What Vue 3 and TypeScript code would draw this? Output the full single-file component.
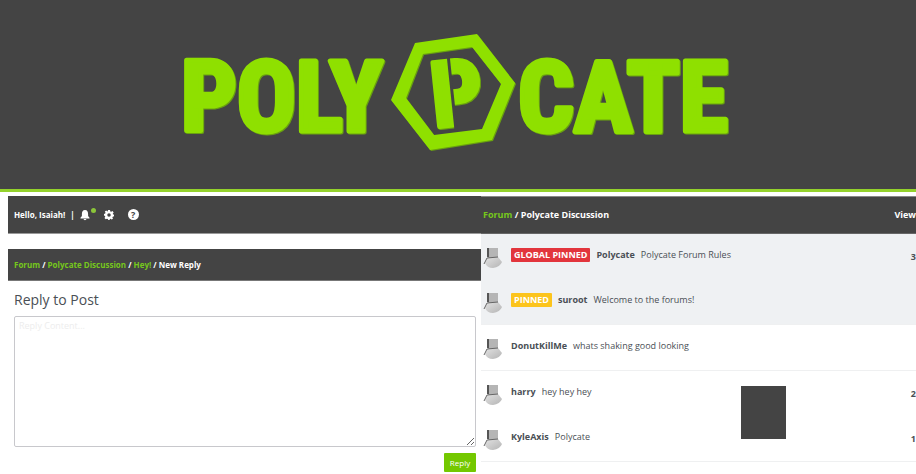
<script setup lang="ts">
interface Topic {
  author: string
  title: string
  views: string
  badge?: string
  tone?: 'global' | 'local'
  divided?: boolean
}

const topics: Topic[] = [
  { author: 'Polycate', title: 'Polycate Forum Rules', views: '3', badge: 'GLOBAL PINNED', tone: 'global' },
  { author: 'suroot', title: 'Welcome to the forums!', views: '', badge: 'PINNED', tone: 'local', divided: true },
  { author: 'DonutKillMe', title: 'whats shaking good looking', views: '', divided: true },
  { author: 'harry', title: 'hey hey hey', views: '2' },
  { author: 'KyleAxis', title: 'Polycate', views: '1', divided: true },
]
</script>

<template>
  <div class="page">
    <header class="banner">
      <svg class="logo" viewBox="158 24 600 136" role="img" aria-label="Polycate">
        <g class="mark">
          <text class="word" x="181" y="131">POLY</text>
          <text class="word" x="518" y="131">CATE</text>
          <path
            fill-rule="evenodd"
            d="M415 43L477 34L515 83L492 140L430 150L391 100ZM423 54L406 98L434 135L482 129L501 84L472 47Z"
          />
          <g transform="rotate(-6 453 92)">
            <text class="emblem" x="431" y="125">P</text>
          </g>
        </g>
        <g transform="rotate(-6 453 92)">
          <path class="slit" d="M452 54V132" />
        </g>
      </svg>
    </header>

    <div class="columns">
      <main class="left">
        <nav class="userbar" aria-label="Account">
          <span>Hello, Isaiah!</span>
          <span class="sep">|</span>
          <button type="button" class="icon bell" aria-label="Notifications">
            <svg width="10" height="12" viewBox="0 0 10 12">
              <path d="M5 1C2.700 1 1.900 2.800 1.900 5V7L.5 8.700V9.500H9.500V8.700L8.100 7V5C8.100 2.800 7.300 1 5 1ZM3.600 10H6.400C6.400 11.500 3.600 11.500 3.600 10Z" />
            </svg>
            <i class="dot"></i>
          </button>
          <button type="button" class="icon gear" aria-label="Settings">
            <svg width="10" height="10" viewBox="0 0 20 20">
              <path
                fill-rule="evenodd"
                d="M8 0H12L12.600 2.900L14.400 3.700L17 2.100L19.300 5L17.500 7.300L17.900 8.600L20 9.500V12.500L17.500 13.300L16.800 15L18 17.300L15.300 19.200L13.200 17.500L12 18L11 20H8.500L7.600 17.900L6 17.300L3.500 18.500L1 16L2.500 13.700L2 12L0 11V8L2.400 7.200L3 5.600L1.700 3.200L4.500 1.200L6.600 2.800L7.500 2.500ZM10 6.500A3.500 3.500 0 1 0 10 13.500A3.500 3.500 0 1 0 10 6.500Z"
              />
            </svg>
          </button>
          <button type="button" class="icon help" aria-label="Help">?</button>
        </nav>

        <nav class="crumbs" aria-label="Breadcrumb">
          <a href="#">Forum</a> / <a href="#">Polycate Discussion</a> / <a href="#">Hey!</a> / New Reply
        </nav>

        <form class="reply" @submit.prevent>
          <label for="reply-body">Reply to Post</label>
          <textarea id="reply-body" placeholder="Reply Content..."></textarea>
          <button type="submit">Reply</button>
        </form>
      </main>

      <section class="right">
        <table>
          <thead>
            <tr>
              <th scope="col"><a href="#">Forum</a> / Polycate Discussion</th>
              <th scope="col" class="views">View</th>
            </tr>
          </thead>
          <tbody>
            <tr v-for="t in topics" :key="t.author" :class="{ pinned: t.badge, divided: t.divided }">
              <td>
                <div class="topic">
                  <svg class="avatar" width="20" height="22" viewBox="0 0 20 22" aria-hidden="true">
                    <defs>
                      <linearGradient id="shade" x1="0" y1="0" x2="1" y2="1">
                        <stop offset="0" stop-color="#e2e2e2" />
                        <stop offset="1" stop-color="#b4b4b4" />
                      </linearGradient>
                    </defs>
                    <path fill="#b5b5b5" d="M5 0H15V11H5Z" />
                    <path fill="#555" d="M4 0H6V9H4Z" />
                    <path fill="url(#shade)" d="M4 10L15 9L19 14Q17 19 10 20Q4 20 2 15Z" />
                    <path fill="none" stroke="#666" d="M1 16L4 10L15 9" />
                  </svg>
                  <span v-if="t.badge" class="badge" :class="t.tone">{{ t.badge }}</span>
                  <b>{{ t.author }}</b>
                  <span class="title">{{ t.title }}</span>
                </div>
              </td>
              <td class="views">{{ t.views }}</td>
            </tr>
          </tbody>
        </table>
        <div class="block"></div>
      </section>
    </div>
  </div>
</template>

<style>
body {
  background: #fff;
  overflow: hidden;
}
</style>

<style scoped>
.page {
  font-family: "Open Sans", "Noto Sans", sans-serif;
  font-size: 9px;
  line-height: 14px;
  color: #4a4f55;
}
.banner {
  display: flex;
  justify-content: center;
  padding: 24px 0 29px;
  background: #444;
  border-bottom: 3px solid #94d22c;
}
.logo {
  width: 100%;
  max-width: 600px;
  height: 136px;
}
.mark {
  fill: #8fe000;
  filter: drop-shadow(1px 1px 0 #69a010);
}
.word,
.emblem {
  font-family: "Roboto Condensed", "Liberation Sans Narrow", "Liberation Sans", sans-serif;
  font-weight: 700;
  stroke: #8fe000;
  stroke-linejoin: round;
}
.word {
  font-size: 98px;
  stroke-width: 5px;
}
.emblem {
  font-size: 90px;
  stroke-width: 5px;
}
.slit {
  fill: none;
  stroke: #444;
  stroke-width: 3px;
}
.columns {
  display: grid;
  grid-template-columns: 473fr 435fr;
  padding: 4px 0 0 8px;
}
.userbar,
.crumbs {
  display: flex;
  align-items: center;
  background: #444;
  color: #fff;
  font-weight: 700;
  font-size: 8px;
  padding: 0 6px;
}
.userbar {
  height: 37px;
  border-bottom: 1px solid #999;
}
.sep {
  margin: 0 5px;
}
.crumbs {
  display: block;
  line-height: 31px;
  margin-top: 15px;
  border-bottom: 1px solid #777;
}
a {
  color: #76c81c;
  text-decoration: none;
}
.icon {
  display: block;
  position: relative;
  border: 0;
  padding: 0;
  background: none;
  color: #444;
  fill: #fff;
}
.icon svg {
  display: block;
}
.dot {
  position: absolute;
  top: -1px;
  right: -6px;
  width: 5px;
  height: 5px;
  border-radius: 50%;
  background: #8bc53a;
}
.gear {
  margin-left: 14px;
}
.help {
  margin-left: 14px;
  width: 11px;
  height: 11px;
  border-radius: 50%;
  background: #fff;
  font: 700 9px/11px "Open Sans", sans-serif;
}
.reply {
  display: flex;
  flex-direction: column;
  padding: 9px 5px 0 6px;
}
.reply label {
  font-size: 14px;
  line-height: 20px;
  margin-bottom: 6px;
}
.reply textarea {
  height: 131px;
  box-sizing: border-box;
  border: 1px solid #c8c8cc;
  border-radius: 2px;
  padding: 2px 4px;
  font: 9px/14px "Open Sans", sans-serif;
}
.reply textarea::placeholder {
  color: #ededed;
}
.reply button {
  align-self: flex-end;
  margin-top: 6px;
  width: 32px;
  height: 19px;
  border: 0;
  border-radius: 1px;
  padding: 0;
  background: #74c800;
  color: #fff;
  font: 8px/19px "Open Sans", sans-serif;
}
.right {
  position: relative;
}
table {
  width: 100%;
  border-collapse: separate;
  border-spacing: 0;
}
th {
  height: 36px;
  padding: 0 0 0 2px;
  background: #444;
  border-top: 1px solid #888;
  border-bottom: 1px solid #666;
  color: #fff;
  text-align: left;
}
td {
  height: 45px;
  padding: 0 0 0 2px;
  vertical-align: top;
}
.pinned td {
  background: #eff1f3;
}
.divided td {
  border-bottom: 1px solid #eff0f1;
}
.topic {
  display: flex;
  align-items: flex-start;
  padding-top: 14px;
}
.topic b {
  margin-right: 6px;
}
.avatar {
  margin-right: 8px;
}
.badge {
  margin-right: 6px;
  padding: 0 3px;
  border-radius: 1px;
  color: #fff;
  font-weight: 700;
}
.global {
  background: #e2353c;
}
.local {
  background: #fcc41c;
}
th.views,
td.views {
  text-align: right;
  padding-left: 0;
}
td.views {
  padding-top: 16px;
  height: 29px;
  font-weight: 700;
}
.block {
  position: absolute;
  right: 130px;
  top: 190px;
  width: 45px;
  height: 53px;
  background: #444;
}
</style>
